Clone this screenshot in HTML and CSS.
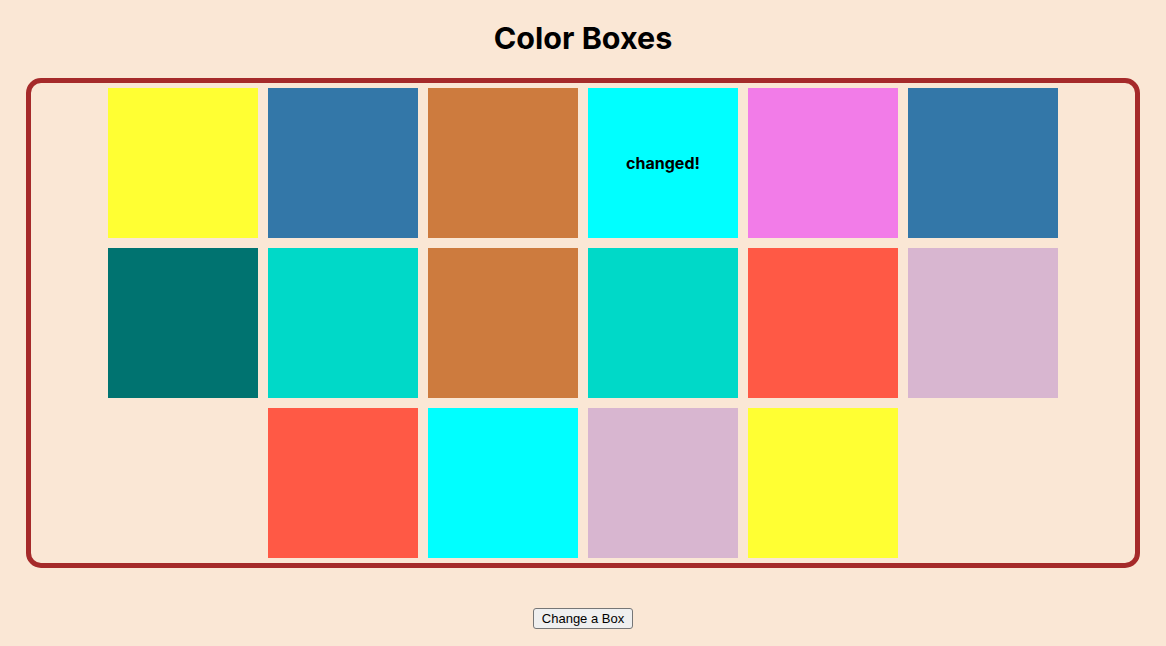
FILE: index.html
```html
<!DOCTYPE html>
<html>
<head>
<meta charset="utf-8">
<title>Color Boxes</title>
<link rel="stylesheet" href="styles.css">
</head>
<body>
<h1 class="title">Color Boxes</h1>
<div class="container">
  <div class="box c-yellow"></div>
  <div class="box c-blue"></div>
  <div class="box c-peru"></div>
  <div class="box c-aqua">changed!</div>
  <div class="box c-violet"></div>
  <div class="box c-blue"></div>
  <div class="box c-teal"></div>
  <div class="box c-turq"></div>
  <div class="box c-peru"></div>
  <div class="box c-turq"></div>
  <div class="box c-tomato"></div>
  <div class="box c-thistle"></div>
  <div class="box c-tomato"></div>
  <div class="box c-aqua"></div>
  <div class="box c-thistle"></div>
  <div class="box c-yellow"></div>
</div>
<div class="actions">
  <button class="btn">Change a Box</button>
</div>
</body>
</html>
```
FILE: styles.css
```css
html, body {
  margin: 0;
  padding: 0;
}
body {
  background: #fae7d5;
  font-family: Inter, "Liberation Sans", sans-serif;
  padding: 1px 26px 0;
}
.title {
  text-align: center;
  font-size: 30.5px;
  font-weight: 700;
  margin: 18px 0 21px;
  line-height: 38px;
}
.container {
  border: 5px solid #a52a2a;
  border-radius: 15px;
  display: flex;
  flex-wrap: wrap;
  justify-content: center;
}
.box {
  width: 150px;
  height: 150px;
  margin: 5px;
  display: flex;
  align-items: center;
  justify-content: center;
  font-weight: 700;
  font-size: 16px;
}
.c-yellow { background: #ffff33; }
.c-blue { background: #3377a8; }
.c-peru { background: #cd7b3e; }
.c-aqua { background: #00ffff; }
.c-violet { background: #f27ce8; }
.c-teal { background: #007370; }
.c-turq { background: #00d9c8; }
.c-tomato { background: #ff5945; }
.c-thistle { background: #d8b6d0; }
.actions {
  display: flex;
  justify-content: center;
  margin-top: 40px;
}
.btn {
  font-family: "Liberation Sans", Arial, sans-serif;
  font-size: 13px;
  padding: 1px 8px;
  background: #efefef;
  border: 1px solid #767676;
  border-radius: 3px;
  color: #000;
  height: 21px;
}
```
